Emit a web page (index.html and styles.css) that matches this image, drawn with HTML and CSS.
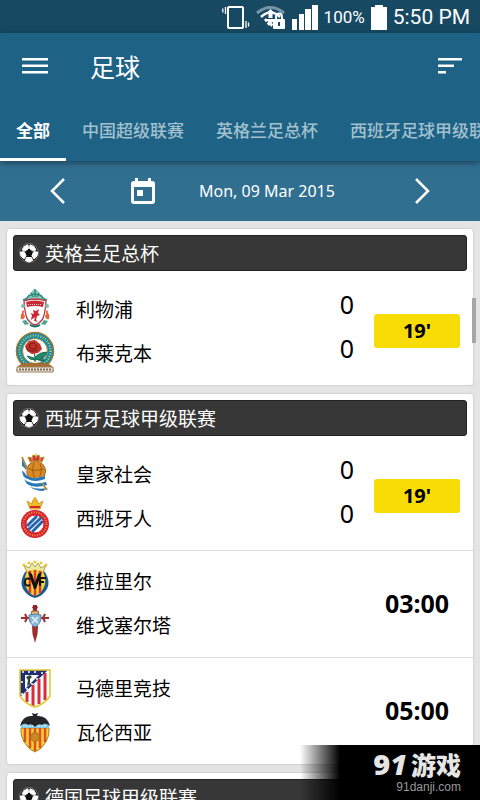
FILE: index.html
```html
<!DOCTYPE html>
<html lang="zh-CN">
<head>
    <meta charset="UTF-8">
    <meta name="viewport" content="width=device-width, initial-scale=1.0">
    <title>足球</title>
    <link rel="stylesheet" href="styles.css">
</head>
<body>
    <!-- Shared symbols -->
    <svg class="symbols" aria-hidden="true">
        <symbol id="ball" viewBox="0 0 20 20">
            <circle cx="10" cy="10" r="9.5" fill="#111" stroke="#888" stroke-width=".8"/>
            <path d="M5 3.500l4-1.700.5 3.700-3 2.300-3.500-.8zM15 3.500l-4-1.700-.5 3.700 3 2.300 3.500-.8zM1.300 9l4-.3 1.700 4-2 3.300-3-3zM18.700 9l-4-.3-1.700 4 2 3.300 3-3zM7.500 14.500h5l1.200 3L10 19l-3.700-1.500z" fill="#fff" stroke="#fff" stroke-width="1" stroke-linejoin="round"/>
        </symbol>
    </svg>

    <!-- Status bar -->
    <div class="status-bar">
        <svg width="28" height="26" viewBox="0 0 28 26" fill="none" stroke="#fff">
            <rect x="6" y="3" width="15" height="21" rx="1" stroke-width="2"/>
            <path d="M3.500 3v7M.8 4.500v4M24 17v7M26.500 18.500v4" stroke-width="1.300"/>
        </svg>
        <svg width="30" height="26" viewBox="0 0 30 26">
            <path d="M1 9Q14.500-2 28 9" fill="none" stroke="#7895a4" stroke-width="3"/>
            <path d="M5 13Q14.500 4 24 13" fill="none" stroke="#fff" stroke-width="2.500"/>
            <path d="M14.500 5l5 5h-3v4h-4v-4h-3zM9 15h11l-5.500 5z" fill="#fff"/>
            <path d="M9 15l5.500 7 3-4" fill="none" stroke="#fff" stroke-width="2.500" stroke-dasharray="3 1.500"/>
            <path d="M20 17v-4q0-3.500 3-3.500t3 3.500v4" fill="none" stroke="#fff" stroke-width="2"/>
            <rect x="17" y="15" width="12" height="10" rx="1" fill="#fff"/>
            <path d="M23 18v4" stroke="#174963" stroke-width="2"/>
        </svg>
        <svg width="26" height="26" viewBox="0 0 26 26" fill="#fff">
            <path d="M0 15h5v11H0zM7 10h5v16H7zM13 5h6v21h-6zM20 1h6v25h-6z"/>
        </svg>
        <span class="percent">100%</span>
        <svg width="16" height="26" viewBox="0 0 16 26" fill="#fff">
            <path d="M4 1h8v2h4v23H0V3h4z"/>
        </svg>
        <span class="clock">5:50 PM</span>
    </div>

    <header class="app-bar">
        <div class="toolbar">
            <button class="icon-btn" type="button" aria-label="菜单">
                <svg width="26" height="16" viewBox="0 0 26 16" fill="#fff"><path d="M0 0h26v2.500H0zM0 6.500h26V9H0zM0 13h26v2.500H0z"/></svg>
            </button>
            <h1>足球</h1>
            <button class="icon-btn" type="button" aria-label="排序">
                <svg width="24" height="16" viewBox="0 0 24 16" fill="#fff"><path d="M0 0h24v2.500H0zM0 6.500h16V9H0zM0 13h8v2.500H0z"/></svg>
            </button>
        </div>
        <nav class="tabs">
            <a class="active" href="#all">全部</a>
            <a href="#csl">中国超级联赛</a>
            <a href="#facup">英格兰足总杯</a>
            <a href="#laliga">西班牙足球甲级联赛</a>
        </nav>
    </header>

    <!-- Date picker row -->
    <div class="date-bar">
        <button class="icon-btn" type="button" aria-label="前一天">
            <svg width="16" height="26" viewBox="0 0 16 26" fill="none" stroke="#fff" stroke-width="2.500"><path d="M14 1L2 13l12 12"/></svg>
        </button>
        <button class="icon-btn calendar" type="button" aria-label="日历">
            <svg width="24" height="26" viewBox="0 0 24 26">
                <path d="M4 0h3v3h10V0h3v3h1q3 0 3 3v17q0 3-3 3H3q-3 0-3-3V6q0-3 3-3h1zM3 9v14h18V9z" fill="#fff" fill-rule="evenodd"/>
                <path d="M6 12h6v6H6z" fill="#fff"/>
            </svg>
        </button>
        <span class="date">Mon, 09 Mar 2015</span>
        <button class="icon-btn" type="button" aria-label="后一天">
            <svg width="16" height="26" viewBox="0 0 16 26" fill="none" stroke="#fff" stroke-width="2.500"><path d="M2 1l12 12L2 25"/></svg>
        </button>
    </div>

    <main class="scores">
        <section class="card" id="facup">
            <h2><svg width="20" height="20"><use href="#ball"/></svg>英格兰足总杯</h2>
            <div class="match">
                <div class="teams">
                    <div class="team">
                        <!-- Liverpool -->
                        <svg class="crest" viewBox="0 0 44 44">
                            <path d="M10 13q4-3 6-5 3-5 6-6 3 1 6 6 2 2 6 5l-3 2H13z" fill="#8cc7bb"/>
                            <path d="M10 13q5-1 6-5M34 13q-5-1-6-5M16 9q6-4 12 0M22 2v8M18 6l2 4M26 6l-2 4" fill="none" stroke="#2b8c7b" stroke-width="1.500"/>
                            <path d="M11 14q11-4 22 0-1 15-4 19-3 4-7 5-4-1-7-5-3-4-4-19z" fill="#fff" stroke="#b93642" stroke-width="1.300"/>
                            <path d="M13 15q9-3 18 0l-1 5q-8-2-16 0z" fill="#c92837"/>
                            <path d="M15 17.500h14" stroke="#f5c8c4" stroke-dasharray="1 1"/>
                            <path d="M20 23l3 1 3-2-1 4 2 2-3 1-1 4 2 2-4-1 1-4-4 3 1-5-2-2 4 1z" fill="#c92837"/>
                            <path d="M8 32q-1-4 1-6 0-4 2-2-1 3 1 5-1 4-4 3zM36 32q1-4-1-6 0-4-2-2 1 3-1 5 1 4 4 3z" fill="#e5683a"/>
                            <path d="M9 34l4-1 2 3q7 5 14 0l2-3 4 1-3 4-4-1q-6 5-12 0l-4 1z" fill="#4ba391"/>
                            <path d="M17 38q5 3 10 0" fill="none" stroke="#176f63" stroke-width="2"/>
                            <circle cx="10" cy="19" r="2" fill="#7fbead"/><circle cx="34" cy="19" r="2" fill="#7fbead"/>
                        </svg>
                        <span class="name">利物浦</span>
                        <span class="score">0</span>
                    </div>
                    <div class="team">
                        <!-- Blackburn -->
                        <svg class="crest" viewBox="0 0 44 44">
                            <circle cx="22" cy="20" r="18.500" fill="#1689b5" stroke="#987b29" stroke-width="1.500"/>
                            <circle cx="22" cy="20" r="15.500" fill="none" stroke="#d3d645" stroke-width="2" stroke-dasharray="1 1.600"/>
                            <circle cx="22" cy="20" r="12.500" fill="#fff" stroke="#a88c35"/>
                            <path d="M21 22q2 5 1 9M22 26q5-5 12-5-1 5-6 7l-6 1q-6 0-8-4l7 2M28 25l4 5-7-1" fill="#258c6b" stroke="#176c55"/>
                            <path d="M12 15l4-5 6-1 5 4 2 5-4 4-6 1-5-3z" fill="#bf3027"/>
                            <path d="M16 14q4-4 7 0t-4 4q-4-1-2-4M13 17q4 5 11 2" fill="none" stroke="#751c20"/>
                            <path d="M5 35l5-3h24l5 3 2 5H3z" fill="#a76b34"/>
                            <path d="M4 36h36v5H4z" fill="#e9e2d4" stroke="#98815e"/>
                            <path d="M6 38.500h32" stroke="#7e7060" stroke-width="2" stroke-dasharray="2 1"/>
                        </svg>
                        <span class="name">布莱克本</span>
                        <span class="score">0</span>
                    </div>
                </div>
                <span class="live">19'</span>
            </div>
        </section>

        <section class="card" id="laliga">
            <h2><svg width="20" height="20"><use href="#ball"/></svg>西班牙足球甲级联赛</h2>
            <div class="match">
                <div class="teams">
                    <div class="team">
                        <!-- Real Sociedad -->
                        <svg class="crest" viewBox="0 0 44 44">
                            <circle cx="23" cy="19" r="9.500" fill="#d98a24" stroke="#9b621d"/>
                            <path d="M15 16q5 4 16 1M21 11q-3 7 1 16M27 12q3 7-1 14" fill="none" stroke="#9b5c19"/>
                            <path d="M9 5q3 5 5 9l-1 9q5 5 10 3l10-2 2 12q-7 3-13 1-8-1-11-10-2-10-2-22z" fill="#fff"/>
                            <path d="M9 5q3 5 5 9l-1 4q-2-3-4-4zM9 19q2 0 4 4 5 4 10 3l9-2v3q-11 4-17 0-4-1-5-4zM11 27q8 7 22 3l1 3q-13 4-20-1zM17 35q8 3 18 1l-5 3q-7 0-13-4z" fill="#2478b9"/>
                            <path d="M9 5l5 12M29 31l5 7" stroke="#b38a3c" stroke-width="1.800"/>
                            <path d="M17 10l-2-5 4 1 1-3 3 1 3-1 1 3 4-1-2 5q-6-2-12 0z" fill="#c93b36" stroke="#c49729"/>
                            <path d="M23 1v5M19 6v3M27 6v3" stroke="#e9ba40"/>
                        </svg>
                        <span class="name">皇家社会</span>
                        <span class="score">0</span>
                    </div>
                    <div class="team">
                        <!-- Espanyol -->
                        <svg class="crest" viewBox="0 0 44 44">
                            <path d="M17 13l-3-8 5 3 1-4 2 1 2-1 1 4 5-3-3 8z" fill="#f2be25" stroke="#d39b22"/>
                            <path d="M22 1v5M20 3h4" stroke="#e7ad20" stroke-width="1.500"/>
                            <path d="M17 11h10" stroke="#d62532" stroke-width="2"/>
                            <circle cx="22" cy="28" r="14" fill="#d91f35"/>
                            <circle cx="22" cy="28" r="11.500" fill="none" stroke="#e9a42c" stroke-width="2" stroke-dasharray="1 1.500"/>
                            <circle cx="22" cy="28" r="9" fill="#fff"/>
                            <path d="M14 30l10-10M15 34l14-13M19 36l11-11" stroke="#2863af" stroke-width="3"/>
                            <circle cx="22" cy="28" r="9" fill="none" stroke="#d91f35"/>
                        </svg>
                        <span class="name">西班牙人</span>
                        <span class="score">0</span>
                    </div>
                </div>
                <span class="live">19'</span>
            </div>

            <div class="match">
                <div class="teams">
                    <div class="team">
                        <!-- Villarreal -->
                        <svg class="crest" viewBox="0 0 44 44">
                            <path d="M14 14l-3-8 5 3 3-5 3 4 3-4 3 5 5-3-3 8z" fill="#eee79e" stroke="#aaa247"/>
                            <g fill="#edc52c"><circle cx="11" cy="6" r="1.500"/><circle cx="16" cy="4" r="1.500"/><circle cx="22" cy="3" r="1.500"/><circle cx="28" cy="4" r="1.500"/><circle cx="33" cy="6" r="1.500"/></g>
                            <path d="M12 13q10-4 20 0 6 10 2 17-4 7-12 9-8-2-12-9-4-7 2-17z" fill="#175b93"/>
                            <path d="M14 12q8-3 16 0 4 10 1 16-3 7-9 9-6-2-9-9-3-6 1-16z" fill="#f5d13a"/>
                            <path d="M17 12v22M22 11v26M27 12v22" stroke="#d43a2d" stroke-width="2.500"/>
                            <path d="M15 13l4 2 3 9 3-9 4-2-6 17h-2z" fill="#111"/>
                            <path d="M17 20q-5-2-5 3t5 3M27 27v-8h6M27 23h4" fill="none" stroke="#111" stroke-width="2"/>
                        </svg>
                        <span class="name">维拉里尔</span>
                    </div>
                    <div class="team">
                        <!-- Celta -->
                        <svg class="crest" viewBox="0 0 44 44">
                            <path d="M19 23h6l-.5 8L22 40l-2.500-9z" fill="#9f2d2a"/>
                            <path d="M10 15h24M12 11l2 4-2 4M32 11l-2 4 2 4M8 15h4M32 15h4" fill="none" stroke="#9f2d2a" stroke-width="2"/>
                            <path d="M22 2v9" stroke="#9f2d2a" stroke-width="4"/>
                            <path d="M19 8h6l1 4h-8z" fill="#e0bc75" stroke="#8f5631"/>
                            <path d="M20 6l-1-2 3-2 3 2-1 2z" fill="#8d2528"/>
                            <path d="M16 12q6-2 12 0 1 8-6 12-7-4-6-12z" fill="#86b8d9" stroke="#5687ad"/>
                            <path d="M19 14l6 6M25 14l-6 6" stroke="#e9f3fa" stroke-width="1.500"/>
                        </svg>
                        <span class="name">维戈塞尔塔</span>
                    </div>
                </div>
                <time class="kickoff">03:00</time>
            </div>

            <div class="match">
                <div class="teams">
                    <div class="team">
                        <!-- Atletico Madrid -->
                        <svg class="crest" viewBox="0 0 44 44">
                            <path d="M7 4h30v26q-5 8-15 11Q12 38 7 30z" fill="#fff"/>
                            <path d="M14 26v10M20 19v21M26 13v25M32 7v27" stroke="#d72d3a" stroke-width="3"/>
                            <path d="M7 4h28L7 31z" fill="#202e76"/>
                            <path d="M12 9h14L12 23z" fill="#fff"/>
                            <path d="M13 11l4-2 2 2-2 2v5l-3 2 1-6z" fill="#34443a"/>
                            <g fill="#fff"><circle cx="10" cy="6" r="1"/><circle cx="16" cy="6" r="1"/><circle cx="22" cy="6" r="1"/><circle cx="29" cy="7" r="1"/><circle cx="24" cy="13" r="1"/><circle cx="19" cy="18" r="1"/><circle cx="14" cy="23" r="1"/><circle cx="9" cy="16" r="1"/><circle cx="9" cy="28" r="1"/></g>
                            <path d="M7 4h30v26q-5 8-15 11Q12 38 7 30z" fill="none" stroke="#e2c62d" stroke-width="1.500"/>
                        </svg>
                        <span class="name">马德里竞技</span>
                    </div>
                    <div class="team">
                        <!-- Valencia -->
                        <svg class="crest" viewBox="0 0 44 44">
                            <path d="M8 18h28q1 7-3 14-5 8-11 10-6-2-11-10-4-7-3-14z" fill="#f8d12d" stroke="#a18835"/>
                            <path d="M12 18v14M17 18v20M22 18v23M27 18v20M32 18v14" stroke="#dc4f2c" stroke-width="2.500"/>
                            <path d="M8 14h28v4H8z" fill="#7fc8e8"/>
                            <path d="M10 16h24" stroke="#e3f4fa" stroke-dasharray="2 1"/>
                            <path d="M20 6l-1-3 3 1 3-1-1 3q10-1 13 10-5-4-8-1-4-2-7 2-3-4-7-2-3-3-8 1 3-11 12-10z" fill="#252528"/>
                            <circle cx="22" cy="27" r="4.500" fill="#c98824" stroke="#aa711e"/>
                        </svg>
                        <span class="name">瓦伦西亚</span>
                    </div>
                </div>
                <time class="kickoff">05:00</time>
            </div>
        </section>

        <section class="card" id="bundesliga">
            <h2><svg width="20" height="20"><use href="#ball"/></svg>德国足球甲级联赛</h2>
        </section>
    </main>
    <div class="scroll-thumb"></div>

    <!-- Site mark in the corner -->
    <footer class="site-mark">
        <span class="brand"><b>9<i>1</i></b>游戏</span>
        <span class="domain">91danji.com</span>
    </footer>
</body>
</html>
```

FILE: styles.css
```css
/* General styles */
* {
    box-sizing: border-box;
}

body {
    margin: 0;
    height: 100vh;
    display: flex;
    flex-direction: column;
    position: relative;
    overflow: hidden;
    background: #e4e4e4;
    color: #000;
    font-family: "Noto Sans", "Noto Sans CJK SC", sans-serif;
}

svg {
    display: block;
    flex: none;
}

.symbols {
    position: absolute;
    width: 0;
    height: 0;
}

/* Status bar */
.status-bar {
    flex: none;
    height: 33px;
    padding: 0 10px 0 0;
    display: flex;
    align-items: center;
    justify-content: flex-end;
    gap: 6px;
    background: #174963;
    color: #fff;
    font-family: Roboto, sans-serif;
}

.percent {
    font-size: 17px;
}

.clock {
    font-size: 21px;
    line-height: 32px;
}

/* App bar */
.app-bar {
    flex: none;
    position: relative;
    z-index: 1;
    background: #1e6285;
    color: #fff;
    box-shadow: 0 2px 6px rgba(0, 0, 0, 0.4);
}

.toolbar {
    height: 67px;
    padding: 0 6px 2px 11px;
    display: flex;
    align-items: center;
}

.icon-btn {
    flex: none;
    width: 48px;
    height: 48px;
    padding: 0;
    border: none;
    background: none;
    display: flex;
    align-items: center;
    justify-content: center;
    cursor: pointer;
}

h1 {
    flex: 1;
    margin: 0 0 0 31px;
    font-family: "Noto Sans CJK SC", sans-serif;
    font-size: 25px;
    font-weight: 400;
    line-height: 36px;
}

/* League tabs */
.tabs {
    display: flex;
    overflow: hidden;
    font-family: "Noto Sans CJK SC", sans-serif;
    font-size: 17px;
    font-weight: 500;
}

.tabs a {
    flex: none;
    height: 61px;
    padding: 0 16px;
    line-height: 59px;
    color: #a2c1cf;
    text-decoration: none;
    white-space: nowrap;
}

.tabs .active {
    color: #fff;
    font-weight: 700;
    box-shadow: inset 0 -3px #fff;
}

/* Date bar */
.date-bar {
    flex: none;
    height: 60px;
    padding: 0 34px;
    display: flex;
    align-items: center;
    background: #316f91;
    color: #fff;
}

.calendar {
    margin-left: 37px;
}

.date {
    flex: 1;
    padding-left: 32px;
    font-size: 16px;
    white-space: nowrap;
}

/* Score list */
.scores {
    flex: 1;
    min-height: 0;
    padding: 8px 7px;
    display: flex;
    flex-direction: column;
    gap: 9px;
    overflow-y: auto;
    scrollbar-width: none;
}

.card {
    flex: none;
    padding-top: 6px;
    background: #fff;
    border-radius: 3px;
    box-shadow: 0 0 2px rgba(0, 0, 0, 0.25);
}

.card h2 {
    height: 36px;
    margin: 0 6px;
    padding: 0 5px;
    display: flex;
    align-items: center;
    gap: 6px;
    border: 1px solid #222;
    border-radius: 3px;
    background: #373737;
    color: #fff;
    font-family: "Noto Sans CJK SC", sans-serif;
    font-size: 19px;
    font-weight: 400;
    line-height: 34px;
}

.match {
    padding: 8px 13px 10px 6px;
    display: flex;
    align-items: center;
    gap: 15px;
}

h2 + .match {
    padding-top: 16px;
}

.match + .match {
    border-top: 1px solid #dcdcdc;
}

.teams {
    flex: 1;
}

.team {
    height: 44px;
    display: flex;
    align-items: center;
}

.crest {
    width: 44px;
    height: 44px;
}

.name {
    flex: 1;
    padding: 0 0 2px 19px;
    font-family: "Noto Sans CJK SC", sans-serif;
    font-size: 19px;
}

.score {
    width: 24px;
    padding-bottom: 10px;
    font-size: 25px;
    line-height: 34px;
    text-align: center;
}

.live,
.kickoff {
    flex: none;
    width: 86px;
    line-height: 34px;
    font-weight: 700;
    text-align: center;
}

.live {
    border-radius: 3px;
    background: #f7dc05;
    font-size: 20px;
}

.kickoff {
    font-size: 25px;
}

/* Overlay scroll thumb */
.scroll-thumb {
    position: absolute;
    top: 298px;
    right: 4px;
    width: 4px;
    height: 45px;
    background: #a6a6a6;
}

/* Corner mark */
.site-mark {
    position: absolute;
    right: 0;
    bottom: 0;
    width: 180px;
    height: 55px;
    padding: 4px 19px 0 0;
    display: flex;
    flex-direction: column;
    align-items: flex-end;
    background: linear-gradient(to right, transparent, #000 40px);
}

.brand {
    color: #e6e6e6;
    font-family: "Noto Sans CJK SC", sans-serif;
    font-size: 25px;
    font-weight: 900;
    line-height: 30px;
}

.brand b {
    margin-right: 4px;
    font-family: "Open Sans", sans-serif;
    font-size: 29px;
    font-weight: 800;
    line-height: 28px;
}

.domain {
    color: #999;
    font-family: "Liberation Sans", Arial, sans-serif;
    font-size: 12px;
    line-height: 16px;
}
```
